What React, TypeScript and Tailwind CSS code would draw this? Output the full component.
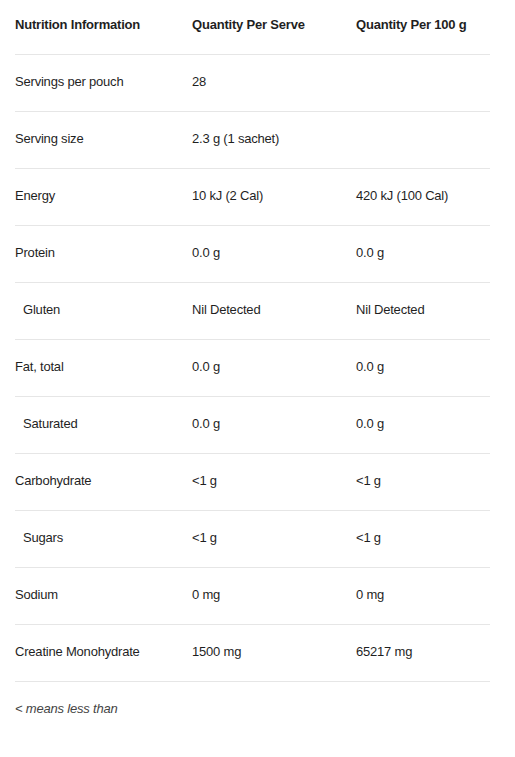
const ROWS: { name: string; serve: string; per100: string; sub?: boolean }[] = [
  { name: 'Servings per pouch', serve: '28', per100: '' },
  { name: 'Serving size', serve: '2.3 g (1 sachet)', per100: '' },
  { name: 'Energy', serve: '10 kJ (2 Cal)', per100: '420 kJ (100 Cal)' },
  { name: 'Protein', serve: '0.0 g', per100: '0.0 g' },
  { name: 'Gluten', serve: 'Nil Detected', per100: 'Nil Detected', sub: true },
  { name: 'Fat, total', serve: '0.0 g', per100: '0.0 g' },
  { name: 'Saturated', serve: '0.0 g', per100: '0.0 g', sub: true },
  { name: 'Carbohydrate', serve: '<1 g', per100: '<1 g' },
  { name: 'Sugars', serve: '<1 g', per100: '<1 g', sub: true },
  { name: 'Sodium', serve: '0 mg', per100: '0 mg' },
  { name: 'Creatine Monohydrate', serve: '1500 mg', per100: '65217 mg' },
]

export default function App() {
  return (
    <div className="bg-white min-h-[757px] pl-[15px] font-['Liberation_Sans',Arial,sans-serif] text-[13px] text-[#1f1f1f] tracking-[-0.2px]">
      <table className="w-[475px] border-collapse table-fixed">
        <colgroup>
          <col className="w-[177px]" />
          <col className="w-[164px]" />
          <col />
        </colgroup>
        <thead>
          <tr className="h-[54px] border-b border-[#e6e6e6]">
            <th className="text-left font-bold pb-[4px] align-middle">Nutrition Information</th>
            <th className="text-left font-bold pb-[4px] align-middle">Quantity Per Serve</th>
            <th className="text-left font-bold pb-[4px] align-middle">Quantity Per 100 g</th>
          </tr>
        </thead>
        <tbody>
          {ROWS.map((r, i) => (
            <tr key={i} className="h-[57px] border-b border-[#e6e6e6]">
              <td className={r.sub ? 'pl-2 pb-[2px]' : 'pb-[2px]'}>{r.name}</td>
              <td className="pb-[2px]">{r.serve}</td>
              <td className="pb-[2px]">{r.per100}</td>
            </tr>
          ))}
        </tbody>
      </table>
      <p className="italic text-[#444] mt-[17px]">&lt; means less than</p>
    </div>
  )
}
